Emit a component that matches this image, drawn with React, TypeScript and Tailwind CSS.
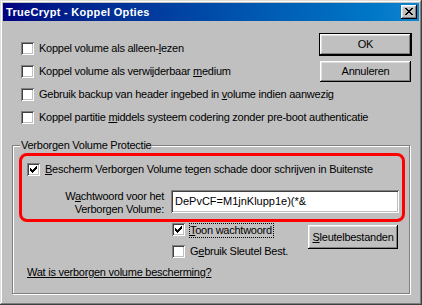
import React from "react";

const sunken =
  "shadow-[inset_1px_1px_0_#808080,inset_-1px_-1px_0_#ffffff,inset_2px_2px_0_#404040,inset_-2px_-2px_0_#c0c0c0]";
const raised =
  "shadow-[inset_-1px_-1px_0_#000000,inset_1px_1px_0_#ffffff,inset_-2px_-2px_0_#808080,inset_2px_2px_0_#dfdfdf]";

function Check({ checked }: { checked?: boolean }) {
  return (
    <span className={`relative block w-[13px] h-[13px] shrink-0 bg-white ${sunken}`}>
      {checked && (
        <svg
          className="absolute left-[3px] top-[3px]"
          width="7"
          height="7"
          viewBox="0 0 7 7"
          shapeRendering="crispEdges"
        >
          <path
            fill="#000"
            d="M6 0h1v1h-1z M5 1h2v1h-2z M0 2h1v1h-1z M4 2h3v1h-3z M0 3h2v1h-2z M3 3h3v1h-3z M0 4h5v1h-5z M1 5h3v1h-3z M2 6h1v1h-1z"
          />
        </svg>
      )}
    </span>
  );
}

function U({ children }: { children: React.ReactNode }) {
  return <u className="underline decoration-1 underline-offset-[1px]">{children}</u>;
}

function Row({ checked, children }: { checked?: boolean; children: React.ReactNode }) {
  return (
    <div className="flex items-start gap-[5px] h-[13px]">
      <Check checked={checked} />
      <span className="whitespace-nowrap">{children}</span>
    </div>
  );
}

export default function App() {
  return (
    <div className="w-[422px] h-[305px] bg-[#c0c0c0] p-[3px] flex flex-col text-[11px] leading-[13px] text-black tracking-[-0.25px] font-['Liberation_Sans',Arial,sans-serif] shadow-[inset_-1px_-1px_0_#404040,inset_1px_1px_0_#dfdfdf,inset_-2px_-2px_0_#808080,inset_2px_2px_0_#ffffff] select-none overflow-hidden">
      {/* Title bar */}
      <div className="h-[18px] shrink-0 flex items-center bg-linear-to-r from-[#000080] to-[#1084d0] pl-[3px] pr-[2px]">
        <span className="font-bold text-white tracking-[0.3px] whitespace-nowrap">
          TrueCrypt - Koppel Opties
        </span>
        <span className={`ml-auto w-[16px] h-[14px] bg-[#c0c0c0] flex items-center justify-center ${raised}`}>
          <svg width="8" height="7" viewBox="0 0 8 7" shapeRendering="crispEdges" className="mt-[-1px] ml-[-1px]">
            <path
              fill="#000"
              d="M0 0h2v1H0z M6 0h2v1H6z M1 1h2v1H1z M5 1h2v1H5z M2 2h4v1H2z M3 3h2v1H3z M2 4h4v1H2z M1 5h2v1H1z M5 5h2v1H5z M0 6h2v1H0z M6 6h2v1H6z"
            />
          </svg>
        </span>
      </div>

      {/* Top section */}
      <div className="flex shrink-0">
        <div className="ml-[18px] mt-[21px] flex flex-col gap-[10px] flex-1 min-w-0">
          <Row>
            Koppel volume als alleen-<U>l</U>ezen
          </Row>
          <Row>
            Koppel volume als verwijderbaar <U>m</U>edium
          </Row>
          <Row>
            Gebruik backup van header ingebed in <U>v</U>olume indien aanwezig
          </Row>
          <Row>
            Koppel partitie <U>m</U>iddels systeem codering zonder pre-boot authenticatie
          </Row>
        </div>
        <div className="shrink-0 mr-[7px] mt-[12px] flex flex-col items-center">
          <div className="w-[93px] h-[23px] border border-black bg-[#c0c0c0]">
            <div className={`w-full h-full flex items-center justify-center ${raised}`}>OK</div>
          </div>
          <div className={`mt-[5px] w-[91px] h-[21px] bg-[#c0c0c0] flex items-center justify-center ${raised}`}>
            Annuleren
          </div>
        </div>
      </div>

      {/* Group box */}
      <div className="relative ml-[9px] mt-[21px] w-[398px] h-[149px] shrink-0 border border-[#808080] shadow-[1px_1px_0_#ffffff,inset_1px_1px_0_#ffffff] flex flex-col">
        <span className="absolute left-[7px] top-[-7px] px-[1px] bg-[#c0c0c0] whitespace-nowrap">
          Verborgen Volume Protectie
        </span>

        {/* Red highlight */}
        <div className="ml-[6px] mt-[7px] w-[386px] h-[69px] border-[3px] border-[#ff0000] rounded-[8px] flex flex-col">
          <div className="ml-[5px] mt-[7px]">
            <Row checked>
              <U>B</U>escherm Verborgen Volume tegen schade door schrijven in Buitenste
            </Row>
          </div>
          <div className="mt-[14px] flex items-start">
            <div className="w-[142px] text-right whitespace-nowrap">
              <div>
                W<U>a</U>chtwoord voor het
              </div>
              <div>Verborgen Volume:</div>
            </div>
            <div className={`ml-[7px] w-[228px] h-[23px] bg-white flex items-center pl-[4px] ${sunken}`}>
              <span className="whitespace-nowrap tracking-normal">DePvCF=M1jnKlupp1e)(*&amp;</span>
            </div>
          </div>
        </div>

        {/* Below */}
        <div className="flex items-start">
          <div className="ml-[159px] w-[136px] flex flex-col">
            <div className="mt-[1px] flex items-start gap-[4px] h-[15px]">
              <Check checked />
              <span className="border border-dotted border-black h-[15px] pr-[1px] whitespace-nowrap">
                <U>T</U>oon wachtwoord
              </span>
            </div>
            <div className="mt-[7px]">
              <Row>
                G<U>e</U>bruik Sleutel Best.
              </Row>
            </div>
          </div>
          <div className={`mt-[3px] w-[90px] h-[24px] bg-[#c0c0c0] flex items-center justify-center ${raised}`}>
            <span>
              <U>S</U>leutelbestanden
            </span>
          </div>
        </div>
        <div className="ml-[14px] mt-[8px] whitespace-nowrap">
          <U>Wat is verborgen volume bescherming?</U>
        </div>
      </div>
    </div>
  );
}
